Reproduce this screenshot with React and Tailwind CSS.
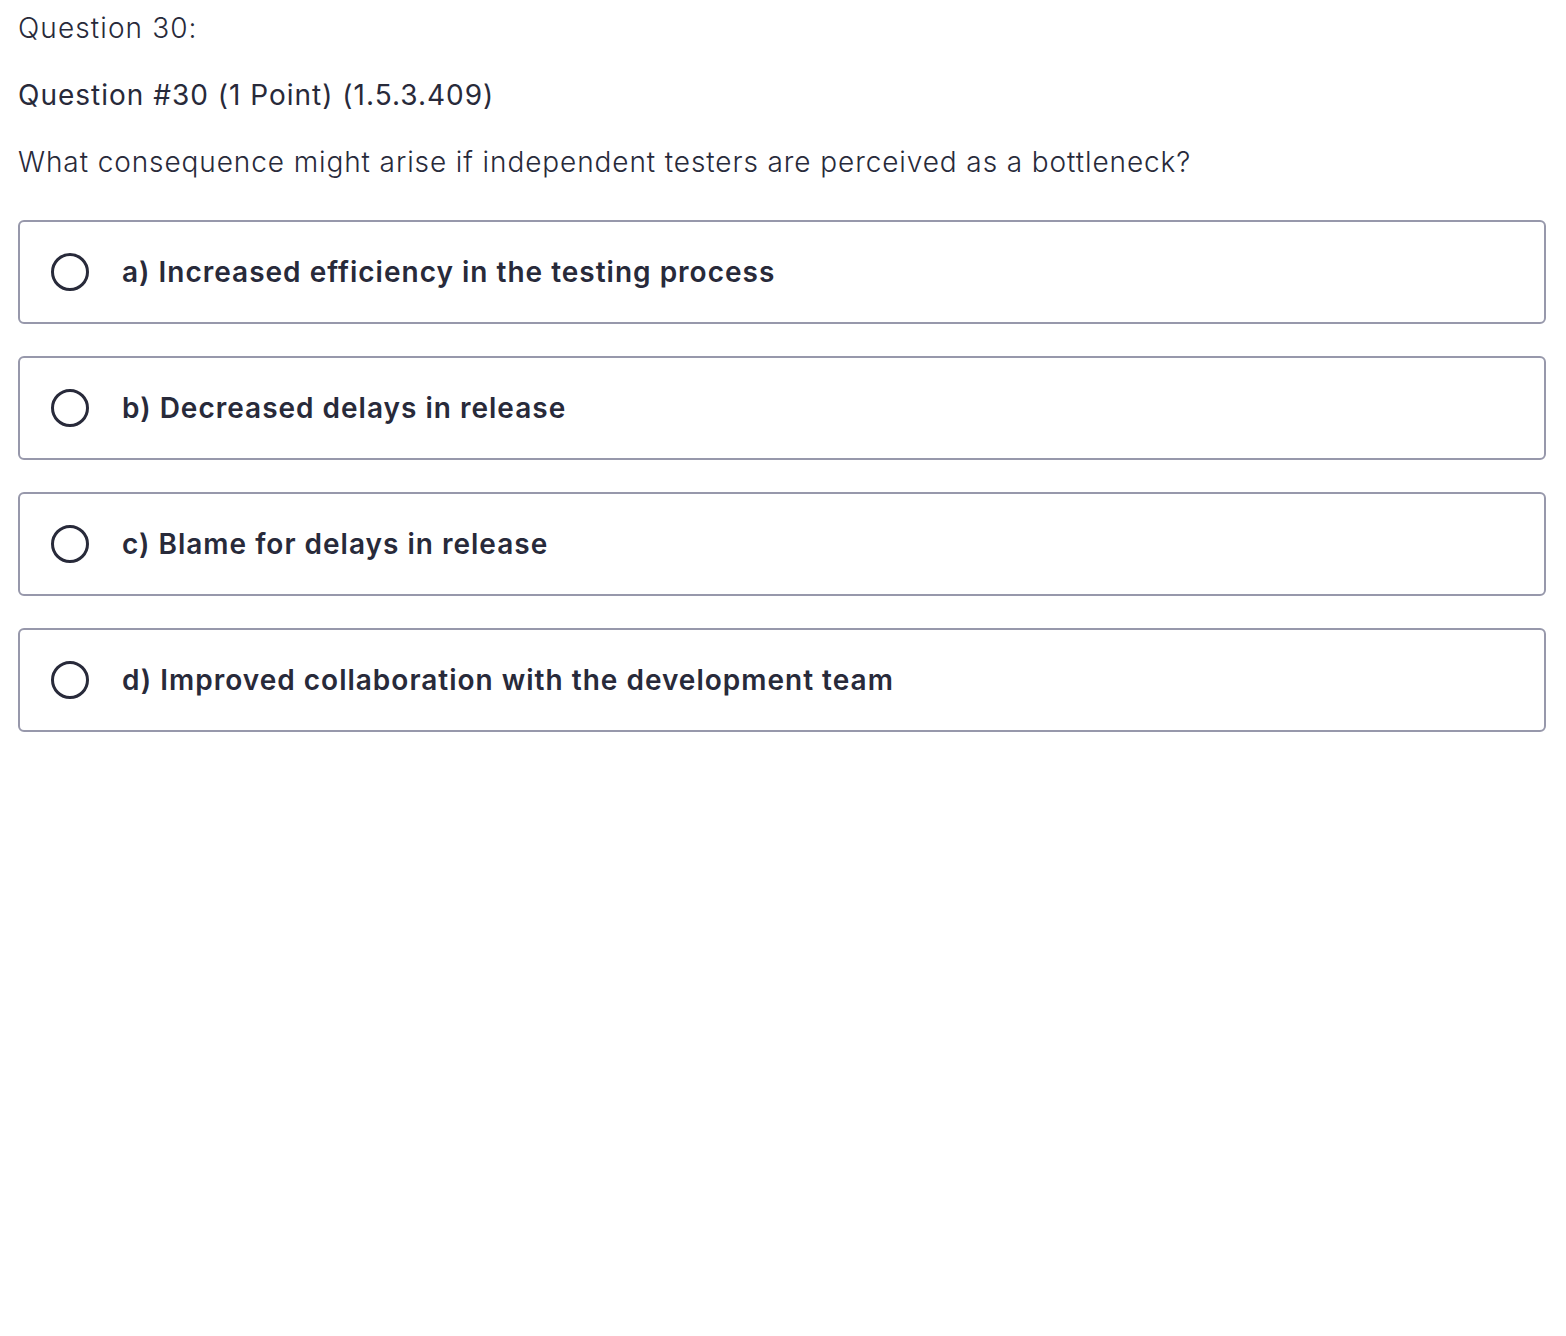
import React from 'react';

const options = [
  'a) Increased efficiency in the testing process',
  'b) Decreased delays in release',
  'c) Blame for delays in release',
  'd) Improved collaboration with the development team',
];

export default function App() {
  return (
    <div className="min-h-screen bg-white pl-[18px] pr-[20px] pt-[8px] text-[#282a3a]" style={{ fontFamily: 'Inter, "Noto Sans", sans-serif' }}>
      <p className="text-[28px] font-light leading-[40px] tracking-[1.1px]">Question 30:</p>
      <p className="mt-[27px] text-[28px] font-normal leading-[40px] tracking-[1px]">Question #30 (1 Point) (1.5.3.409)</p>
      <p className="mt-[27px] text-[28px] font-light leading-[40px] tracking-[0.9px]">What consequence might arise if independent testers are perceived as a bottleneck?</p>

      <div className="mt-[38px] flex flex-col gap-[32px]">
        {options.map((opt) => (
          <label key={opt} className="flex h-[104px] items-center rounded-[6px] border-2 border-[#9798ab] pl-[31px]">
            <span className="h-[38px] w-[38px] shrink-0 rounded-full border-[3px] border-[#282a3a]"></span>
            <span className="ml-[33px] text-[28px] font-semibold tracking-[1px]">{opt}</span>
          </label>
        ))}
      </div>
    </div>
  );
}
